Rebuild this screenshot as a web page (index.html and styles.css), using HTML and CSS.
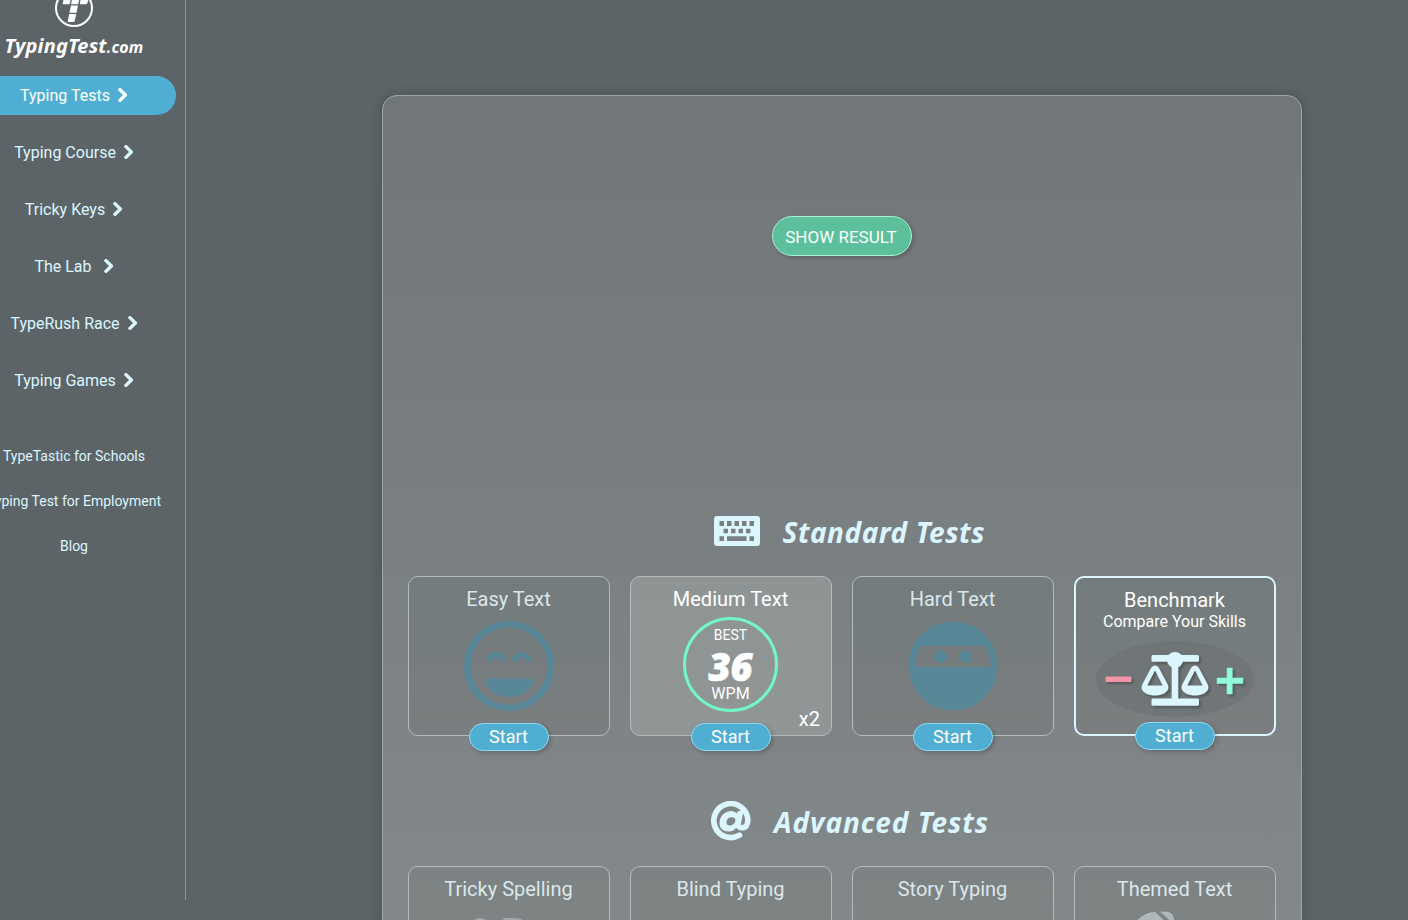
FILE: index.html
```
<!DOCTYPE html>
<html lang="en">
<head>
<meta charset="utf-8">
<title>TypingTest.com</title>
<link rel="stylesheet" href="styles.css">
</head>
<body>
<svg class="defs" aria-hidden="true">
  <symbol id="chevron" viewBox="0 0 10 14"><path d="M2 1.700 7.400 7 2 12.300" fill="none" stroke="currentColor" stroke-width="3.300" stroke-linecap="square" stroke-linejoin="round"/></symbol>
</svg>
<div class="page">
  <aside class="sidebar">
    <a class="brand">
      <svg class="brand-mark" width="40" height="28" viewBox="0 0 40 28">
        <circle cx="20" cy="8" r="18" fill="none" stroke="#fff" stroke-width="2"/>
        <g fill="#fff">
          <path d="M10-2h7l-1.400 6.300H9.500q-1 0-.8-1zM18.300-2h7.200l-1.400 6.300H17zM27-2h8l-1.600 5q-.4 1.300-1.400 1.300H25.700zM17 5.500h7l-1.500 7.200H15.400zM15.200 13.900h7l-1.400 6.600q-.3 1.500-1.500 1.500H14.700q-1 0-.8-1.200z"/>
        </g>
      </svg>
      <span class="brand-name">TypingTest<small>.com</small></span>
    </a>
    <nav class="menu">
      <a class="menu-item active"><span>Typing Tests</span><svg class="chev"><use href="#chevron"/></svg></a>
      <a class="menu-item"><span>Typing Course</span><svg class="chev"><use href="#chevron"/></svg></a>
      <a class="menu-item"><span>Tricky Keys</span><svg class="chev"><use href="#chevron"/></svg></a>
      <a class="menu-item wide"><span>The Lab</span><svg class="chev"><use href="#chevron"/></svg></a>
      <a class="menu-item"><span>TypeRush Race</span><svg class="chev"><use href="#chevron"/></svg></a>
      <a class="menu-item"><span>Typing Games</span><svg class="chev"><use href="#chevron"/></svg></a>
    </nav>
    <nav class="links">
      <a>TypeTastic for Schools</a>
      <a>Typing Test for Employment</a>
      <a>Blog</a>
    </nav>
  </aside>
  <main class="panel">
    <div class="result"><button class="show">SHOW RESULT</button></div>
    <h2 class="heading">
      <svg width="46" height="30" viewBox="0 0 46 30"><path fill="#dcf6ff" fill-rule="evenodd" d="M3 0h40q3 0 3 3v24q0 3-3 3H3q-3 0-3-3V3q0-3 3-3zM5.500 5v5h4.500V5zM13 5v5h4.500V5zM20.500 5v5h4.500V5zM28 5v5h4.500V5zM35.500 5v5h4.500V5zM9.500 12.800v4.400h4.500v-4.400zM17 12.800v4.400h4.500v-4.400zM24.500 12.800v4.400h4.500v-4.400zM32 12.800v4.400h4.500v-4.400zM5.500 20.200v4.800h4.500v-4.800zM13 20.200v4.800h19.500v-4.800zM35.500 20.200v4.800h4.500v-4.800z"/></svg>
      <span class="h-standard">Standard Tests</span>
    </h2>
    <section class="cards">
      <article class="card">
        <h3>Easy Text</h3>
        <svg class="face" width="90" height="90" viewBox="0 0 90 90" fill="none" stroke="#588797">
          <circle cx="45" cy="45" r="41.700" stroke-width="6.600"/>
          <path d="M25.500 38C28 32.300 36 32.300 39 38M50.800 38C53.500 32.300 61.500 32.300 64.300 38" stroke-width="5.500" stroke-linecap="round"/>
          <path fill="#588797" stroke="none" d="M24 57.500H66.500Q70 58 69.200 62C65 71 56 76 45 76S25.500 71 21.300 62Q20.500 58 24 57.500z"/>
        </svg>
        <button class="start">Start</button>
      </article>
      <article class="card done">
        <h3>Medium Text</h3>
        <div class="score"><span>BEST</span><strong>36</strong><span>WPM</span></div>
        <span class="times">x2</span>
        <button class="start">Start</button>
      </article>
      <article class="card">
        <h3>Hard Text</h3>
        <svg class="face" width="90" height="90" viewBox="0 0 90 90" fill="#588797">
          <path fill-rule="evenodd" d="M45 .5a44.500 44.500 0 1 1 0 89a44.500 44.500 0 1 1 0-89zM12.500 25Q7 34 7 46H83Q82.500 34 77.500 25z"/>
          <circle cx="32.400" cy="35.500" r="6.300"/><circle cx="57.500" cy="35.500" r="6.300"/>
        </svg>
        <button class="start">Start</button>
      </article>
      <article class="card benchmark">
        <h3>Benchmark</h3>
        <p>Compare Your Skills</p>
        <svg class="balance" width="158" height="76" viewBox="0 0 158 76">
          <ellipse cx="79" cy="38" rx="79" ry="38" fill="#6f7476" fill-opacity=".85"/>
          <g class="lift">
            <rect x="9.500" y="35.500" width="26" height="5.500" rx="1" fill="#f294a6"/>
            <path fill="#8ffbd8" stroke="#8ffbd8" stroke-width=".5" stroke-linejoin="round" d="M131 27h5.300v10H147v5.500H136.300V53H131V42.500H121V37H131z"/>
            <g fill="#dcf6ff">
              <rect x="55.500" y="14" width="47.500" height="6.800" rx="1.500"/>
              <circle cx="79" cy="19" r="8"/>
              <rect x="75.700" y="18" width="6.600" height="43"/>
              <rect x="55.500" y="57.500" width="47.500" height="7.300" rx="1.500"/>
              <path fill-rule="evenodd" d="M59 24.500Q61.600 24.500 63 27L71.500 43Q72.500 45 72.500 47C71.500 52 65.500 54.500 59 54.500S46.500 52 45.500 47Q45.500 45 46.500 43L55 27Q56.400 24.500 59 24.500zM59 29.500 51.300 44.500H66.700z"/>
              <path fill-rule="evenodd" d="M99 24.500Q101.600 24.500 103 27L111.500 43Q112.500 45 112.500 47C111.500 52 105.500 54.500 99 54.500S86.500 52 85.500 47Q85.500 45 86.500 43L95 27Q96.400 24.500 99 24.500zM99 29.500 91.300 44.500H106.700z"/>
            </g>
          </g>
        </svg>
        <button class="start">Start</button>
      </article>
    </section>
    <h2 class="heading second">
      <svg width="40" height="40" viewBox="0 0 40 40" fill="none" stroke="#dcf6ff">
        <path stroke-width="5.600" stroke-linecap="round" d="M28.500 34.200A17 17 0 1 1 36.800 18.500C37 24 34.500 26.800 31 26.800C28 26.800 26.700 25 27.300 22L29.200 12.500"/>
        <path fill="#dcf6ff" stroke="none" fill-rule="evenodd" d="M20.500 10Q24 10 26 12.500L26.500 10.500H31L29 27H25Q22 30.500 18 30.500C12 30.500 8.500 27 8.500 22C8.500 15 14 10 20.500 10zM21 16.300C17.500 16.300 15.500 18.500 15.500 21.500C15.500 23.500 16.800 24.500 18.800 24.500C22 24.500 24.400 22 24.400 19C24.400 17.300 23.200 16.300 21 16.300z"/>
      </svg>
      <span class="h-advanced">Advanced Tests</span>
    </h2>
    <section class="cards">
      <article class="card"><h3>Tricky Spelling</h3>
        <svg class="peek" width="90" height="90" viewBox="0 0 90 90" fill="#a1a8aa"><path d="M10 11Q12 7 17 7t7 4v9H10zM40 9q0-2 2-2h9q8 0 11 4v9H40z"/></svg>
      </article>
      <article class="card"><h3>Blind Typing</h3></article>
      <article class="card"><h3>Story Typing</h3></article>
      <article class="card"><h3>Themed Text</h3>
        <svg class="peek" width="90" height="90" viewBox="0 0 90 90" fill="#b0b7b9"><path d="M7 11Q15 1 26 1L40 14V30H3zM31 .700Q39 0 43 3Q46 7 45 13z"/></svg>
      </article>
    </section>
  </main>
</div>
</body>
</html>
```
FILE: styles.css
```
* { box-sizing: border-box; }
body { margin: 0; height: 920px; overflow: hidden; background: #5c6467; color: #dcf6ff; font-family: Roboto, sans-serif; }
.defs { display: none; }
.page { display: flex; height: 920px; overflow: hidden; }
.sidebar { flex: none; width: 186px; height: 900px; border-right: 1px solid #8d9395; overflow: hidden; }
.brand { display: flex; flex-direction: column; align-items: center; width: 148px; height: 76px; color: #fff; }
.brand-mark { display: block; }
.brand-name { margin-top: 3px; font: italic 700 20px/30px "Noto Sans", sans-serif; letter-spacing: .15px; white-space: nowrap; }
.brand-name small { font-size: 16px; }
.menu { display: flex; flex-direction: column; gap: 18px; }
.menu-item { display: flex; align-items: center; justify-content: center; gap: 8px; width: 176px; height: 39px; padding-right: 28px; font-size: 16px; white-space: nowrap; }
.menu-item.active { background: #51aed3; color: #fff; border-radius: 0 20px 20px 0; }
.menu-item.wide { gap: 12px; }
.chev { width: 10px; height: 14px; margin-bottom: 2px; }
.links { display: flex; flex-direction: column; gap: 25px; align-items: center; width: 148px; margin-top: 46px; font-size: 14px; line-height: 20px; }
.links a { flex: none; white-space: nowrap; }
.panel { flex: none; width: 920px; height: 960px; margin: 95px 0 0 196px; padding: 0 25px; border: 1px solid #a0a5a7; border-radius: 15px; background: linear-gradient(#707679, #868b8c); box-shadow: 0 0 12px rgba(0,0,0,.2); }
.result { height: 405px; padding-top: 120px; text-align: center; }
button { font-family: Roboto, sans-serif; color: #fff; }
.show { width: 140px; height: 40px; padding: 2px 2px 0 0; border: 1px solid #a9f1d5; border-radius: 20px; background: #5bc09b; font-size: 17px; box-shadow: 2px 2px 4px rgba(0,0,0,.2); }
.heading { display: flex; align-items: center; justify-content: center; gap: 23px; height: 60px; margin: 0; padding-left: 14px; font: italic 700 28px/40px "Noto Sans", sans-serif; white-space: nowrap; }
.h-standard, .h-advanced { padding-top: 2px; }
.h-standard { width: 202px; letter-spacing: .55px; }
.h-advanced { width: 215px; letter-spacing: .95px; }
.cards { display: flex; gap: 20px; margin-top: 15px; }
.card { position: relative; display: flex; flex-direction: column; align-items: center; flex: none; width: 202px; height: 160px; padding-top: 10px; border: 1px solid #b6babb; border-radius: 10px; background: linear-gradient(rgba(103,116,116,.4), rgba(112,112,112,.3)); }
.second + .cards .card { background: rgba(112,116,116,.25); }
.card h3 { margin: 0 1px 0 0; font-size: 20px; font-weight: 400; line-height: 24px; color: #dbe7eb; }
.card.done { background: rgba(170,176,172,.42); }
.card.done h3, .benchmark h3 { color: #fff; }
.face { margin-top: 10px; }
.start { position: absolute; left: 60px; top: 146px; width: 80px; height: 28px; padding: 0 1px 0 0; border: 1px solid #8bdbf0; border-radius: 14px; background: #51aed3; font-size: 18px; line-height: 26px; box-shadow: 2px 2px 4px rgba(0,0,0,.2); }
.score { display: flex; flex-direction: column; align-items: center; width: 95px; height: 95px; margin: 6px 1px 0 0; padding-top: 6px; border: 3px solid #72f8c5; border-radius: 50%; color: #fff; font-size: 14px; line-height: 18px; }
.score strong { margin: 3px 0 1px; font: italic 800 38px/38px "Open Sans", sans-serif; -webkit-text-stroke: .6px #fff; }
.score span:last-child { font-size: 16px; line-height: 16px; }
.times { position: absolute; right: 11px; bottom: 4px; color: #fff; font-size: 20px; line-height: 24px; }
.benchmark { border: 2px solid #dcf6ff; }
.benchmark p { margin: 1px 1px 0 0; color: #fff; font-size: 16px; line-height: 18px; }
.benchmark .start { left: 59px; top: 144px; }
.balance { margin-top: 10px; }
.lift { filter: drop-shadow(2px 2px 1px rgba(0,0,0,.25)); }
.second { height: 60px; margin-top: 55px; padding-left: 16px; }
.peek { margin-top: 10px; margin-left: -2px; }
```
